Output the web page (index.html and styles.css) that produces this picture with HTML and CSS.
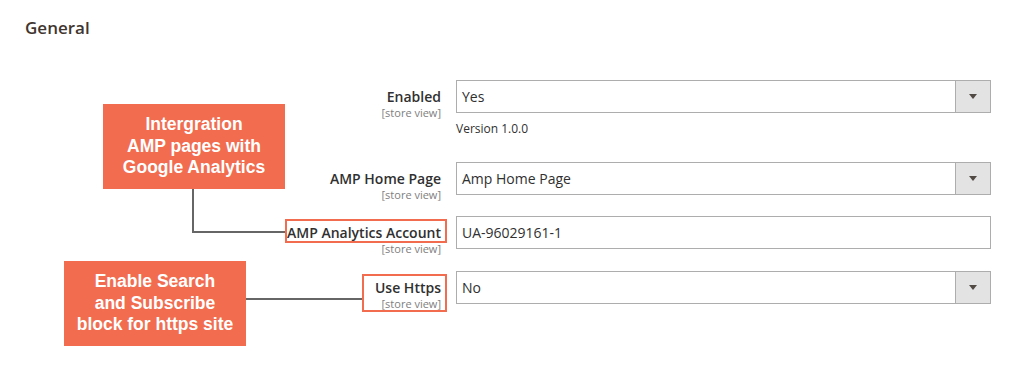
FILE: index.html
```html
<!DOCTYPE html>
<html lang="en">

<head>
    <meta charset="UTF-8" />
    <meta name="viewport" content="width=device-width, initial-scale=1" />
    <title>AMP - General Settings</title>
    <link rel="stylesheet" href="styles.css">
</head>

<body>
    <div class="page">
        <h2 class="section-title">General</h2>

        <div class="fieldset">
            <div class="field">
                <div class="label">
                    <span class="label-text">Enabled</span>
                    <span class="scope">[store view]</span>
                </div>
                <div class="control">
                    <div class="select"><span class="value">Yes</span><span class="select-btn"><span class="arrow"></span></span></div>
                    <div class="note">Version 1.0.0</div>
                </div>
            </div>

            <div class="field">
                <div class="label">
                    <span class="label-text">AMP Home Page</span>
                    <span class="scope">[store view]</span>
                </div>
                <div class="control">
                    <div class="select"><span class="value">Amp Home Page</span><span class="select-btn"><span class="arrow"></span></span></div>
                </div>
            </div>

            <div class="field">
                <div class="label">
                    <span class="label-text">AMP Analytics Account</span>
                    <span class="scope">[store view]</span>
                </div>
                <div class="control">
                    <div class="input"><span class="value">UA-96029161-1</span></div>
                </div>
            </div>

            <div class="field">
                <div class="label">
                    <span class="label-text">Use Https</span>
                    <span class="scope">[store view]</span>
                </div>
                <div class="control">
                    <div class="select"><span class="value">No</span><span class="select-btn"><span class="arrow"></span></span></div>
                </div>
            </div>
        </div>

        <!-- annotations -->
        <svg class="overlay" width="1023" height="372" viewBox="0 0 1023 372">
            <polyline points="193,189 193,232 286,232" fill="none" stroke="#666" stroke-width="2" />
            <line x1="246" y1="299" x2="363" y2="299" stroke="#666" stroke-width="2" />
            <rect x="286" y="220" width="160" height="22" fill="none" stroke="#f26c4f" stroke-width="2" />
            <rect x="363" y="275" width="83" height="36" fill="none" stroke="#f26c4f" stroke-width="2" />
        </svg>

        <div class="callout callout-amp">Intergration<br>AMP pages with<br>Google Analytics</div>
        <div class="callout callout-https">Enable Search<br>and Subscribe<br>block for https site</div>
    </div>
</body>

</html>
```

FILE: styles.css
```css
:root {
    --text: #303030;
    --muted: #808080;
    --border: #adadad;
    --orange: #f26c4f;
}

body {
    margin: 0;
    font-family: 'Open Sans', sans-serif;
    color: var(--text);
    background-color: #fff;
}

.page {
    position: relative;
    width: 1023px;
    height: 372px;
    overflow: hidden;
}

.section-title {
    margin: 0;
    padding: 17px 0 0 25px;
    font-size: 17px;
    line-height: 22px;
    font-weight: 600;
    color: #41362f;
}

.fieldset {
    margin-top: 41px;
    padding-left: 25px;
}

.field {
    display: grid;
    grid-template-columns: 416px 535px;
    column-gap: 15px;
    align-items: start;
    margin-bottom: 21.5px;
}

/* label column is as tall as the control; the scope hint hangs below */
.label {
    display: flex;
    flex-direction: column;
    align-items: flex-end;
    height: 33px;
    box-sizing: border-box;
    padding-top: 7px;
}

.label-text {
    font-size: 14px;
    line-height: 19px;
    font-weight: 600;
}

.scope {
    font-size: 11px;
    line-height: 13px;
    color: var(--muted);
}

.select,
.input {
    display: flex;
    align-items: center;
    height: 33px;
    box-sizing: border-box;
    border: 1px solid var(--border);
    background-color: #fff;
}

.value {
    flex: 1;
    padding-left: 5px;
    font-size: 14px;
    line-height: 19px;
}

.select-btn {
    display: flex;
    align-items: center;
    justify-content: center;
    width: 34px;
    height: 100%;
    border-left: 1px solid var(--border);
    background-color: #e3e3e3;
}

.arrow {
    width: 0;
    height: 0;
    border-top: 5px solid #514943;
    border-left: 4px solid transparent;
    border-right: 4px solid transparent;
}

.note {
    margin-top: 5px;
    font-size: 12px;
    line-height: 22px;
}

.overlay {
    position: absolute;
    top: 0;
    left: 0;
    pointer-events: none;
}

.callout {
    position: absolute;
    width: 182px;
    height: 85px;
    display: flex;
    align-items: center;
    justify-content: center;
    text-align: center;
    background-color: var(--orange);
    color: #fff;
    font-family: 'Liberation Sans', Arial, sans-serif;
    font-weight: 700;
    font-size: 17.5px;
    line-height: 21.5px;
}

.callout-amp {
    left: 103px;
    top: 104px;
}

.callout-https {
    left: 64px;
    top: 261px;
}
```
